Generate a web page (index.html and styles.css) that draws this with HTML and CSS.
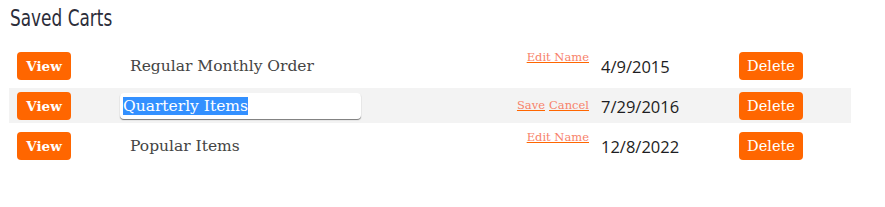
FILE: index.html
```html
<!DOCTYPE html>
<html>
<head>
<meta charset="utf-8">
<link rel="stylesheet" href="styles.css">
</head>
<body>
<div class="page">
  <h2 class="title"><span class="title-text">Saved Carts</span></h2>
  <div class="carts">
    <div class="row">
      <div class="c-view"><button class="btn">View</button></div>
      <div class="c-name"><span class="name">Regular Monthly Order</span></div>
      <div class="c-act top"><a class="lnk" href="#">Edit Name</a></div>
      <div class="c-date">4/9/2015</div>
      <div class="c-del"><button class="btn">Delete</button></div>
    </div>
    <div class="row alt">
      <div class="c-view"><button class="btn">View</button></div>
      <div class="c-name"><input class="name-input" type="text" value="Quarterly Items"></div>
      <div class="c-act mid"><a class="lnk" href="#">Save</a> <a class="lnk" href="#">Cancel</a></div>
      <div class="c-date">7/29/2016</div>
      <div class="c-del"><button class="btn">Delete</button></div>
    </div>
    <div class="row">
      <div class="c-view"><button class="btn">View</button></div>
      <div class="c-name"><span class="name">Popular Items</span></div>
      <div class="c-act top"><a class="lnk" href="#">Edit Name</a></div>
      <div class="c-date">12/8/2022</div>
      <div class="c-del"><button class="btn">Delete</button></div>
    </div>
  </div>
</div>
<script>
  var i = document.querySelector('.name-input');
  i.focus(); i.select();
</script>
</body>
</html>
```

FILE: styles.css
```css
html, body { margin: 0; padding: 0; background: #fff; }
.page { padding: 0 34px 0 9px; }
.title {
  margin: 0;
  padding: 5px 0 0 1px;
  height: 48px;
  box-sizing: border-box;
  font-family: "DejaVu Sans", sans-serif;
  font-weight: normal;
  font-size: 23.5px;
  line-height: 27px;
  color: #2b2d3a;
}
.title-text {
  display: inline-block;
  transform: scaleX(0.72);
  transform-origin: left center;
}
.carts { display: flex; flex-direction: column; gap: 5px; width: 842px; }
.row {
  display: grid;
  grid-template-columns: 111px 360px 112px 139px 1fr;
  height: 35px;
  align-items: center;
}
.row.alt { background: #f3f3f3; }
.c-view { padding-left: 8px; }
.btn {
  border: none;
  background: #ff6600;
  color: #fff;
  border-radius: 4px;
  height: 28px;
  padding: 0;
  font-family: "DejaVu Serif", serif;
  cursor: pointer;
  display: block;
}
.c-view .btn { width: 54px; font-weight: bold; font-size: 13.5px; }
.c-del { padding-left: 8px; }
.c-del .btn { width: 64px; font-weight: normal; font-size: 14.5px; }
.name {
  display: block;
  padding-left: 10px;
  font-family: "DejaVu Serif", serif;
  font-size: 15.5px;
  color: #444;
}
.name-input {
  display: block;
  box-sizing: border-box;
  width: 241px;
  height: 26px;
  border: none;
  border-radius: 4px;
  background: #fff;
  box-shadow: 0 1px 1px #777;
  padding: 0 3px;
  font-family: "DejaVu Serif", serif;
  font-size: 15.5px;
  color: #444;
  outline: none;
}
.name-input::selection { background: #3390ff; color: #fff; }
.c-act { text-align: right; padding-right: 3px; font-size: 0; }
.c-act.top { align-self: start; padding-top: 2px; }
.c-act.mid { padding-bottom: 2px; }
.lnk {
  font-family: "DejaVu Serif", serif;
  font-size: 11.5px;
  color: #f7826a;
  text-decoration: underline;
  text-decoration-color: #ff6600;
  margin-left: 4px;
}
.c-date {
  padding-left: 9px;
  padding-top: 1px;
  font-family: "Open Sans", sans-serif;
  font-size: 16.5px;
  color: #1d1d22;
}
```
